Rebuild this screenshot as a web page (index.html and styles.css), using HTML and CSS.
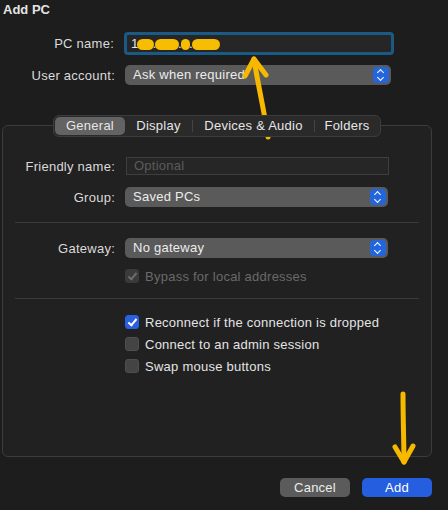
FILE: index.html
```html
<!DOCTYPE html>
<html lang="en">
<head>
    <meta charset="UTF-8">
    <title>Add PC</title>
    <link rel="stylesheet" href="styles.css">
</head>
<body>
    <div class="sheet">
        <h1 class="title">Add PC</h1>

        <div class="row row-pc">
            <label class="lbl">PC name:</label>
            <div class="field focus">1<span class="blot">00</span>.<span class="blot">100</span>.<span class="blot">0</span>.<span class="blot wide">100</span></div>
        </div>
        <div class="row row-user">
            <label class="lbl">User account:</label>
            <div class="popup w-user">Ask when required<span class="stepper"></span></div>
        </div>

        <div class="tabs">
            <span class="tab on">General</span>
            <span class="tab t-display">Display</span>
            <span class="tab t-devices">Devices &amp; Audio</span>
            <span class="tab t-folders">Folders</span>
        </div>

        <div class="box">
            <div class="row row-friendly">
                <label class="lbl">Friendly name:</label>
                <div class="field plain">Optional</div>
            </div>
            <div class="row row-group">
                <label class="lbl">Group:</label>
                <div class="popup w-box">Saved PCs<span class="stepper"></span></div>
            </div>
            <hr class="sep sep-1">
            <div class="row">
                <label class="lbl">Gateway:</label>
                <div class="popup w-box">No gateway<span class="stepper"></span></div>
            </div>
            <div class="check-row dim row-bypass"><span class="cb checked"></span>Bypass for local addresses</div>
            <hr class="sep sep-2">
            <div class="check-row row-reconnect"><span class="cb checked"></span>Reconnect if the connection is dropped</div>
            <div class="check-row"><span class="cb"></span>Connect to an admin session</div>
            <div class="check-row"><span class="cb"></span>Swap mouse buttons</div>
        </div>

        <div class="actions">
            <button class="btn">Cancel</button>
            <button class="btn primary">Add</button>
        </div>

        <svg class="marks" width="448" height="510" viewBox="0 0 448 510">
            <g fill="none" stroke="#f7b900" stroke-width="5" stroke-linecap="round" stroke-linejoin="round">
                <path d="M268 137 C265 115 258 85 254 59"/>
                <path d="M245 76 L254 59 L266 75"/>
                <path d="M403 394 C403 420 404 445 404 462"/>
                <path d="M395 447 L404 462 L413 446"/>
            </g>
        </svg>
    </div>
</body>
</html>
```

FILE: styles.css
```css
body {
    margin: 0;
    background: #1d1d1d;
    font-family: "Liberation Sans", Arial, sans-serif;
    font-size: 13px;
    letter-spacing: 0.25px;
    color: #dedede;
}
.sheet {
    position: relative;
    width: 448px;
    height: 510px;
    overflow: hidden;
}
.title {
    margin: 0;
    padding: 2px 0 0 3px;
    font-size: 13px;
    line-height: 15px;
    font-weight: bold;
    letter-spacing: 0;
    color: #e4e4e4;
}
.row {
    display: flex;
    align-items: center;
}
.lbl {
    width: 125px;
    box-sizing: border-box;
    padding-right: 10px;
    text-align: right;
    color: #dadada;
}
.box .lbl {
    width: 122px;
}
.row-pc {
    margin-top: 15px;
}
.row-pc .lbl {
    width: 124px;
}
.row-user {
    margin-top: 10px;
}
.field {
    box-sizing: border-box;
    background: #262626;
    color: #e8e8e8;
}
.field.focus {
    width: 270px;
    height: 23px;
    border: 3px solid #1a5a87;
    border-radius: 4px;
    padding-left: 4px;
    line-height: 17px;
    letter-spacing: 0;
}
.blot {
    display: inline-block;
    height: 11px;
    line-height: 11px;
    vertical-align: -1px;
    color: transparent;
    background: #f7bd00;
    border-radius: 6px;
    margin: 0 -1px;
    padding: 0 1px;
}
.blot.wide {
    padding: 0 4px 0 3px;
}
.field.plain {
    width: 263px;
    height: 18px;
    border: 1px solid #3e3e3e;
    padding-left: 7px;
    line-height: 16px;
    color: #5c5c5c;
    margin-left: 1px;
}
.popup {
    position: relative;
    box-sizing: border-box;
    height: 20px;
    line-height: 20px;
    padding-left: 8px;
    background: #5a5a5a;
    border-radius: 5px;
    color: #ececec;
}
.w-user {
    width: 266px;
}
.w-box {
    width: 263px;
}
.stepper {
    position: absolute;
    right: 2px;
    top: 2px;
    width: 16px;
    height: 16px;
    border-radius: 4px;
    background: #2366dc;
}
.stepper::before,
.stepper::after {
    content: "";
    position: absolute;
    left: 5px;
    width: 4px;
    height: 4px;
    border-left: 1.5px solid #fff;
    border-top: 1.5px solid #fff;
}
.stepper::before {
    top: 3px;
    transform: rotate(45deg);
}
.stepper::after {
    top: 8px;
    transform: rotate(225deg);
}
.tabs {
    position: relative;
    z-index: 1;
    display: flex;
    width: 328px;
    height: 22px;
    box-sizing: border-box;
    margin: 30px 0 0 53px;
    padding: 1px;
    background: #2a2a2a;
    border: 1px solid #3c3c3c;
    border-radius: 6px;
}
.tab {
    text-align: center;
    line-height: 18px;
    color: #e6e6e6;
    border-radius: 5px;
}
.tab.on {
    width: 70px;
    background: #636363;
}
.t-display {
    width: 67px;
}
.t-devices {
    width: 121px;
    border-left: 1px solid #444;
    border-right: 1px solid #444;
    border-radius: 0;
    margin: 3px 0;
    line-height: 12px;
}
.t-folders {
    flex: 1;
}
.box {
    width: 430px;
    height: 332px;
    box-sizing: border-box;
    margin: -12px 0 0 2px;
    padding-top: 31px;
    background: #212121;
    border: 1px solid #3c3c3c;
    border-radius: 6px;
}
.row-group {
    margin-top: 12px;
}
.sep {
    margin: 15px 12px;
    border: 0;
    border-top: 1px solid #3a3a3a;
}
.sep-2 {
    margin-top: 15px;
    margin-bottom: 16px;
}
.check-row {
    display: flex;
    align-items: center;
    height: 14px;
    margin: 8px 0 0 122px;
    color: #e4e4e4;
}
.row-bypass {
    margin-top: 11px;
}
.row-reconnect {
    margin-top: 0;
}
.check-row.dim {
    color: #6a6a6a;
}
.cb {
    position: relative;
    width: 14px;
    height: 14px;
    box-sizing: border-box;
    margin-right: 6px;
    border-radius: 3px;
    background: #444;
    border: 1px solid #4e4e4e;
}
.cb.checked {
    background: #2a5fe0;
    border-color: #2a5fe0;
}
.cb.checked::after {
    content: "";
    position: absolute;
    left: 4px;
    top: 1px;
    width: 3px;
    height: 7px;
    border-right: 2px solid #fff;
    border-bottom: 2px solid #fff;
    transform: rotate(40deg);
}
.dim .cb.checked {
    background: #3a3a3a;
    border-color: #3a3a3a;
}
.dim .cb.checked::after {
    border-color: #6c6c6c;
}
.actions {
    display: flex;
    justify-content: flex-end;
    gap: 12px;
    width: 432px;
    margin-top: 21px;
}
.btn {
    width: 70px;
    height: 19px;
    padding: 0;
    border: 0;
    border-radius: 5px;
    background: #5b5b5b;
    color: #ececec;
    font: inherit;
    letter-spacing: 0.25px;
    line-height: 19px;
}
.btn.primary {
    background: #255fdf;
    color: #fff;
}
.marks {
    position: absolute;
    left: 0;
    top: 0;
    pointer-events: none;
}
```
